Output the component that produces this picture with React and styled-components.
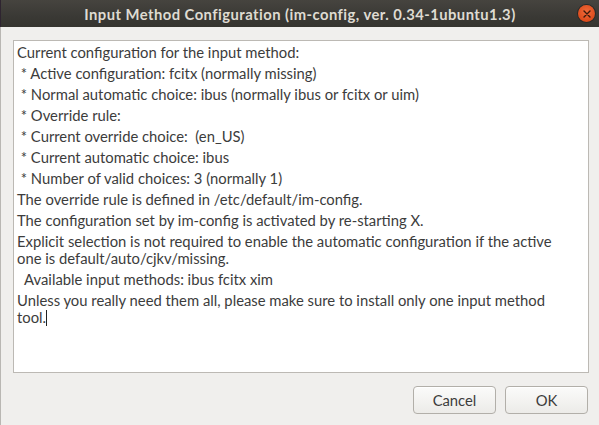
import React from "react";
import styled, { createGlobalStyle } from "styled-components";

const lines = [
  "Current configuration for the input method:",
  " * Active configuration: fcitx (normally missing)",
  " * Normal automatic choice: ibus (normally ibus or fcitx or uim)",
  " * Override rule: ",
  " * Current override choice:  (en_US)",
  " * Current automatic choice: ibus",
  " * Number of valid choices: 3 (normally 1)",
  "The override rule is defined in /etc/default/im-config.",
  "The configuration set by im-config is activated by re-starting X.",
  "Explicit selection is not required to enable the automatic configuration if the active\none is default/auto/cjkv/missing.",
  "  Available input methods: ibus fcitx xim",
  "Unless you really need them all, please make sure to install only one input method\ntool.",
];

const GlobalStyle = createGlobalStyle`
  html, body {
    margin: 0;
    padding: 0;
    height: 100%;
    overflow: hidden;
  }
  #root {
    height: 100%;
  }
`;

const Window = styled.div`
  height: 425px;
  display: flex;
  flex-direction: column;
  background: #f0efed;
  border-left: 1px solid #b9b7b3;
  font-family: Lato, "Noto Sans", sans-serif;
  box-sizing: border-box;
`;

const TitleBar = styled.div`
  height: 27px;
  flex-shrink: 0;
  display: grid;
  grid-template-columns: 1fr auto 1fr;
  align-items: center;
  background: linear-gradient(#46443f, #3a3935 60%, #35342f);
  border-left: 1px solid #2e2430;
  margin-left: -1px;
`;

const Title = styled.div`
  color: #dfdbd2;
  font-weight: bold;
  font-size: 14.8px;
  letter-spacing: 0.45px;
  white-space: nowrap;
`;

const CloseButton = styled.div`
  justify-self: end;
  margin-right: 4px;
  width: 17px;
  height: 17px;
  border-radius: 50%;
  background: radial-gradient(circle at 50% 40%, #f26b3a, #dc4b1c 70%, #b93b12);
  box-shadow: 0 0 0 1px #2a2927;
  display: flex;
  align-items: center;
  justify-content: center;
`;

const Body = styled.div`
  flex: 1;
  display: flex;
  flex-direction: column;
  padding: 13px 10px 10px 12px;
  min-height: 0;
`;

const TextArea = styled.div`
  height: 333px;
  background: #fff;
  border: 1px solid #bcb9b4;
  padding: 1px 3px 0;
  color: #3c3c3c;
  font-size: 14.8px;
  box-sizing: border-box;
`;

const Para = styled.div`
  white-space: pre;
  line-height: 17px;
  padding: 2px 0;
`;

const Caret = styled.span`
  display: inline-block;
  width: 1px;
  height: 16px;
  background: #222;
  vertical-align: -3px;
`;

const ButtonRow = styled.div`
  display: flex;
  justify-content: flex-end;
  gap: 9px;
  margin-top: 13px;
  margin-right: 1px;
`;

const Button = styled.button`
  width: 83px;
  height: 28px;
  border: 1px solid #b2afa9;
  border-radius: 4px;
  background: linear-gradient(#fbfbfa, #ecebe8);
  box-shadow: inset 0 1px 0 #fff;
  color: #3c3c3c;
  font-family: Lato, "Noto Sans", sans-serif;
  font-size: 14.8px;
  padding: 0;
`;

export default function App() {
  return (
    <>
      <GlobalStyle />
      <Window>
        <TitleBar>
          <span />
          <Title>Input Method Configuration (im-config, ver. 0.34-1ubuntu1.3)</Title>
          <CloseButton>
            <svg width="8" height="8" viewBox="0 0 8 8">
              <path d="M1 1 L7 7 M7 1 L1 7" stroke="#3a1a0c" strokeWidth="1.4" strokeLinecap="round" />
            </svg>
          </CloseButton>
        </TitleBar>
        <Body>
          <TextArea>
            {lines.map((l, i) => (
              <Para key={i}>
                {l}
                {i === lines.length - 1 && <Caret />}
              </Para>
            ))}
          </TextArea>
          <ButtonRow>
            <Button>Cancel</Button>
            <Button>OK</Button>
          </ButtonRow>
        </Body>
      </Window>
    </>
  );
}
